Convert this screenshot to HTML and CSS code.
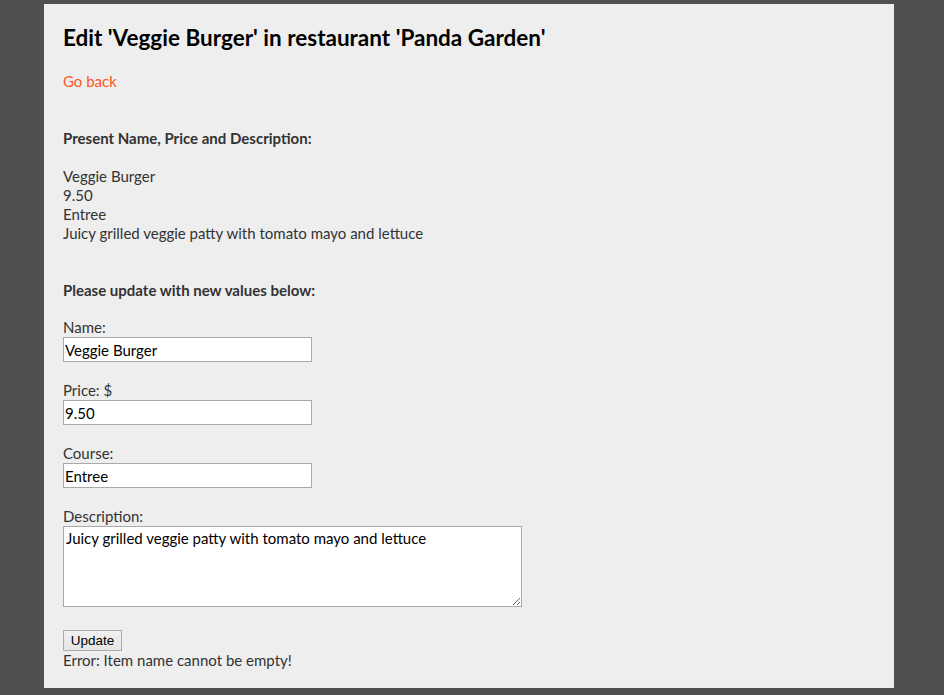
FILE: index.html
```html
<!DOCTYPE html>
<html>
<head>
<meta charset="utf-8">
<link rel="stylesheet" href="styles.css">
</head>
<body>
<div class="panel">
  <h1 class="title">Edit 'Veggie Burger' in restaurant 'Panda Garden'</h1>
  <a class="back" href="#">Go back</a>
  <p class="heading first">Present Name, Price and Description:</p>
  <div class="values">
    <div>Veggie Burger</div>
    <div>9.50</div>
    <div>Entree</div>
    <div>Juicy grilled veggie patty with tomato mayo and lettuce</div>
  </div>
  <p class="heading second">Please update with new values below:</p>
  <form class="form">
    <label class="label">Name:</label>
    <input class="field" type="text" value="Veggie Burger">
    <label class="label">Price: $</label>
    <input class="field" type="text" value="9.50">
    <label class="label">Course:</label>
    <input class="field" type="text" value="Entree">
    <label class="label">Description:</label>
    <textarea class="area">Juicy grilled veggie patty with tomato mayo and lettuce</textarea>
    <button class="btn" type="button">Update</button>
    <div class="error">Error: Item name cannot be empty!</div>
  </form>
</div>
</body>
</html>
```
FILE: styles.css
```css
html, body {
  margin: 0;
  padding: 0;
}
body {
  background: #505050;
  padding-top: 4px;
  height: 695px;
  box-sizing: border-box;
  overflow: hidden;
  font-family: Lato, "Open Sans", sans-serif;
  font-size: 15px;
  line-height: 19px;
  color: #333333;
}
.panel {
  width: 850px;
  margin-left: 44px;
  background: #eeeeee;
  box-sizing: border-box;
  padding: 19px 19px 18px 19px;
}
.title {
  margin: 0;
  font-size: 22.5px;
  line-height: 30px;
  font-weight: bold;
  color: #000000;
}
.back {
  display: block;
  margin-top: 19px;
  color: #ff5722;
  text-decoration: none;
}
.heading {
  margin: 0;
  font-weight: bold;
}
.heading.first {
  margin-top: 38px;
}
.values {
  margin-top: 19px;
}
.heading.second {
  margin-top: 38px;
}
.form {
  display: flex;
  flex-direction: column;
  align-items: flex-start;
  margin-top: 18px;
}
.label {
  display: block;
}
.field {
  width: 249px;
  height: 25px;
  box-sizing: border-box;
  border: 1px solid #a9a9a9;
  background: #ffffff;
  padding: 0 1px;
  font-family: inherit;
  font-size: 15px;
  color: #000000;
  margin-bottom: 19px;
}
.area {
  display: block;
  width: 459px;
  height: 81px;
  box-sizing: border-box;
  border: 1px solid #a9a9a9;
  background: #ffffff;
  padding: 2px 2px;
  font-family: inherit;
  font-size: 15px;
  line-height: 19px;
  color: #000000;
  resize: both;
  margin-bottom: 23px;
}
.btn {
  width: 59px;
  height: 21px;
  padding: 0;
  border: 1px solid #acacac;
  border-radius: 0;
  background: linear-gradient(#f0f0f0, #e5e5e5);
  font-family: "Liberation Sans", Arial, sans-serif;
  font-size: 13.5px;
  color: #000000;
}
.error {
  margin-top: 0;
}
```
